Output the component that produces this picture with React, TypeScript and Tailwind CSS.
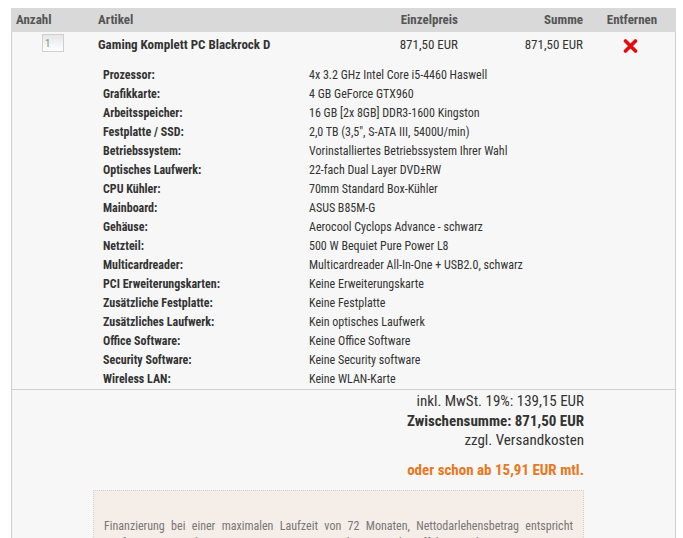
import React from 'react';

interface Spec {
  label: string;
  value: string;
}

const specs: Spec[] = [
  { label: 'Prozessor:', value: '4x 3.2 GHz Intel Core i5-4460 Haswell' },
  { label: 'Grafikkarte:', value: '4 GB GeForce GTX960' },
  { label: 'Arbeitsspeicher:', value: '16 GB [2x 8GB] DDR3-1600 Kingston' },
  { label: 'Festplatte / SSD:', value: '2,0 TB (3,5", S-ATA III, 5400U/min)' },
  { label: 'Betriebssystem:', value: 'Vorinstalliertes Betriebssystem Ihrer Wahl' },
  { label: 'Optisches Laufwerk:', value: '22-fach Dual Layer DVD±RW' },
  { label: 'CPU Kühler:', value: '70mm Standard Box-Kühler' },
  { label: 'Mainboard:', value: 'ASUS B85M-G' },
  { label: 'Gehäuse:', value: 'Aerocool Cyclops Advance - schwarz' },
  { label: 'Netzteil:', value: '500 W Bequiet Pure Power L8' },
  { label: 'Multicardreader:', value: 'Multicardreader All-In-One + USB2.0, schwarz' },
  { label: 'PCI Erweiterungskarten:', value: 'Keine Erweiterungskarte' },
  { label: 'Zusätzliche Festplatte:', value: 'Keine Festplatte' },
  { label: 'Zusätzliches Laufwerk:', value: 'Kein optisches Laufwerk' },
  { label: 'Office Software:', value: 'Keine Office Software' },
  { label: 'Security Software:', value: 'Keine Security software' },
  { label: 'Wireless LAN:', value: 'Keine WLAN-Karte' },
];

const RemoveIcon = () => (
  <svg width="15" height="14" viewBox="0 0 15 14">
    <path d="M2.5 2 L12.5 12 M12.5 2 L2.5 12" stroke="#e30b0b" strokeWidth="3.6" strokeLinecap="round" />
  </svg>
);

const cols = 'grid grid-cols-[87px_282px_83px_125px_88px]';

const App: React.FC = () => {
  return (
    <div
      className="min-h-[538px] bg-white pt-2 text-[#333]"
      style={{ fontFamily: '"Roboto Condensed", "Liberation Sans Narrow", Roboto, sans-serif' }}
    >
      <div className="ml-[11px] w-[665px]">
        <div className={`${cols} h-6 items-center bg-[#d9d9d9] text-[13px] font-bold text-[#555]`}>
          <div className="pl-[5px]">Anzahl</div>
          <div>Artikel</div>
          <div className="pr-[5px] text-right">Einzelpreis</div>
          <div className="pr-[5px] text-right">Summe</div>
          <div className="text-center">Entfernen</div>
        </div>

        <div className="border-x border-[#d0d0d0] bg-[#f7f7f7]">
          <div className={`${cols} -mx-px border-b border-[#d0d0d0] pb-[1px]`}>
            <div className="flex justify-center pt-[2px] pr-[3px]">
              <input
                readOnly
                value="1"
                className="h-[18px] w-[22px] border border-[#cfcfcf] bg-gradient-to-b from-[#e6e6e6] to-white px-[2px] text-[11px] text-[#888] outline-none"
              />
            </div>
            <div className="pt-[5px]">
              <div className="text-[13px] font-bold leading-4">Gaming Komplett PC Blackrock D</div>
              <div className="mt-[12px] pl-[5px] text-[12px]">
                {specs.map((s) => (
                  <div key={s.label} className="flex h-[19px] items-center">
                    <div className="w-[206px] shrink-0 font-bold">{s.label}</div>
                    <div className="whitespace-nowrap">{s.value}</div>
                  </div>
                ))}
              </div>
            </div>
            <div className="pt-[5px] pr-[5px] text-right text-[13px] leading-4">871,50 EUR</div>
            <div className="pt-[5px] pr-[5px] text-right text-[13px] leading-4">871,50 EUR</div>
            <div className="flex justify-center pt-[7px] pr-[3px]">
              <RemoveIcon />
            </div>
          </div>

          <div className="w-[577px] pt-[2px]">
            <div className="pr-[5px] text-right text-[15px] leading-[19.5px]">
              <div>inkl. MwSt. 19%: 139,15 EUR</div>
              <div className="font-bold">Zwischensumme: 871,50 EUR</div>
              <div>zzgl. Versandkosten</div>
              <div className="mt-[10px] font-bold text-[#e8781e]">oder schon ab 15,91 EUR mtl.</div>
            </div>
            <div className="mt-[10px] ml-[81px] w-[491px] border border-dotted border-[#d6cfc8] bg-[#f4ede8] px-[10px] pt-[27px] pb-4 text-justify text-[12px] leading-[17px] text-[#777]">
              Finanzierung bei einer maximalen Laufzeit von 72 Monaten, Nettodarlehensbetrag entspricht
              Kaufpreis. Gesamtbetrag: 1.145,00 EUR, sowie der ermittelte effektive Jahreszins von 9,49% effektiv
              und gebundener Sollzinssatz von 9,08% p.a. Die Angaben gelten vorbehaltlich einer positiven Bonitätsprüfung.
            </div>
            <div className="h-8" />
          </div>
        </div>
      </div>
    </div>
  );
};

export default App;
